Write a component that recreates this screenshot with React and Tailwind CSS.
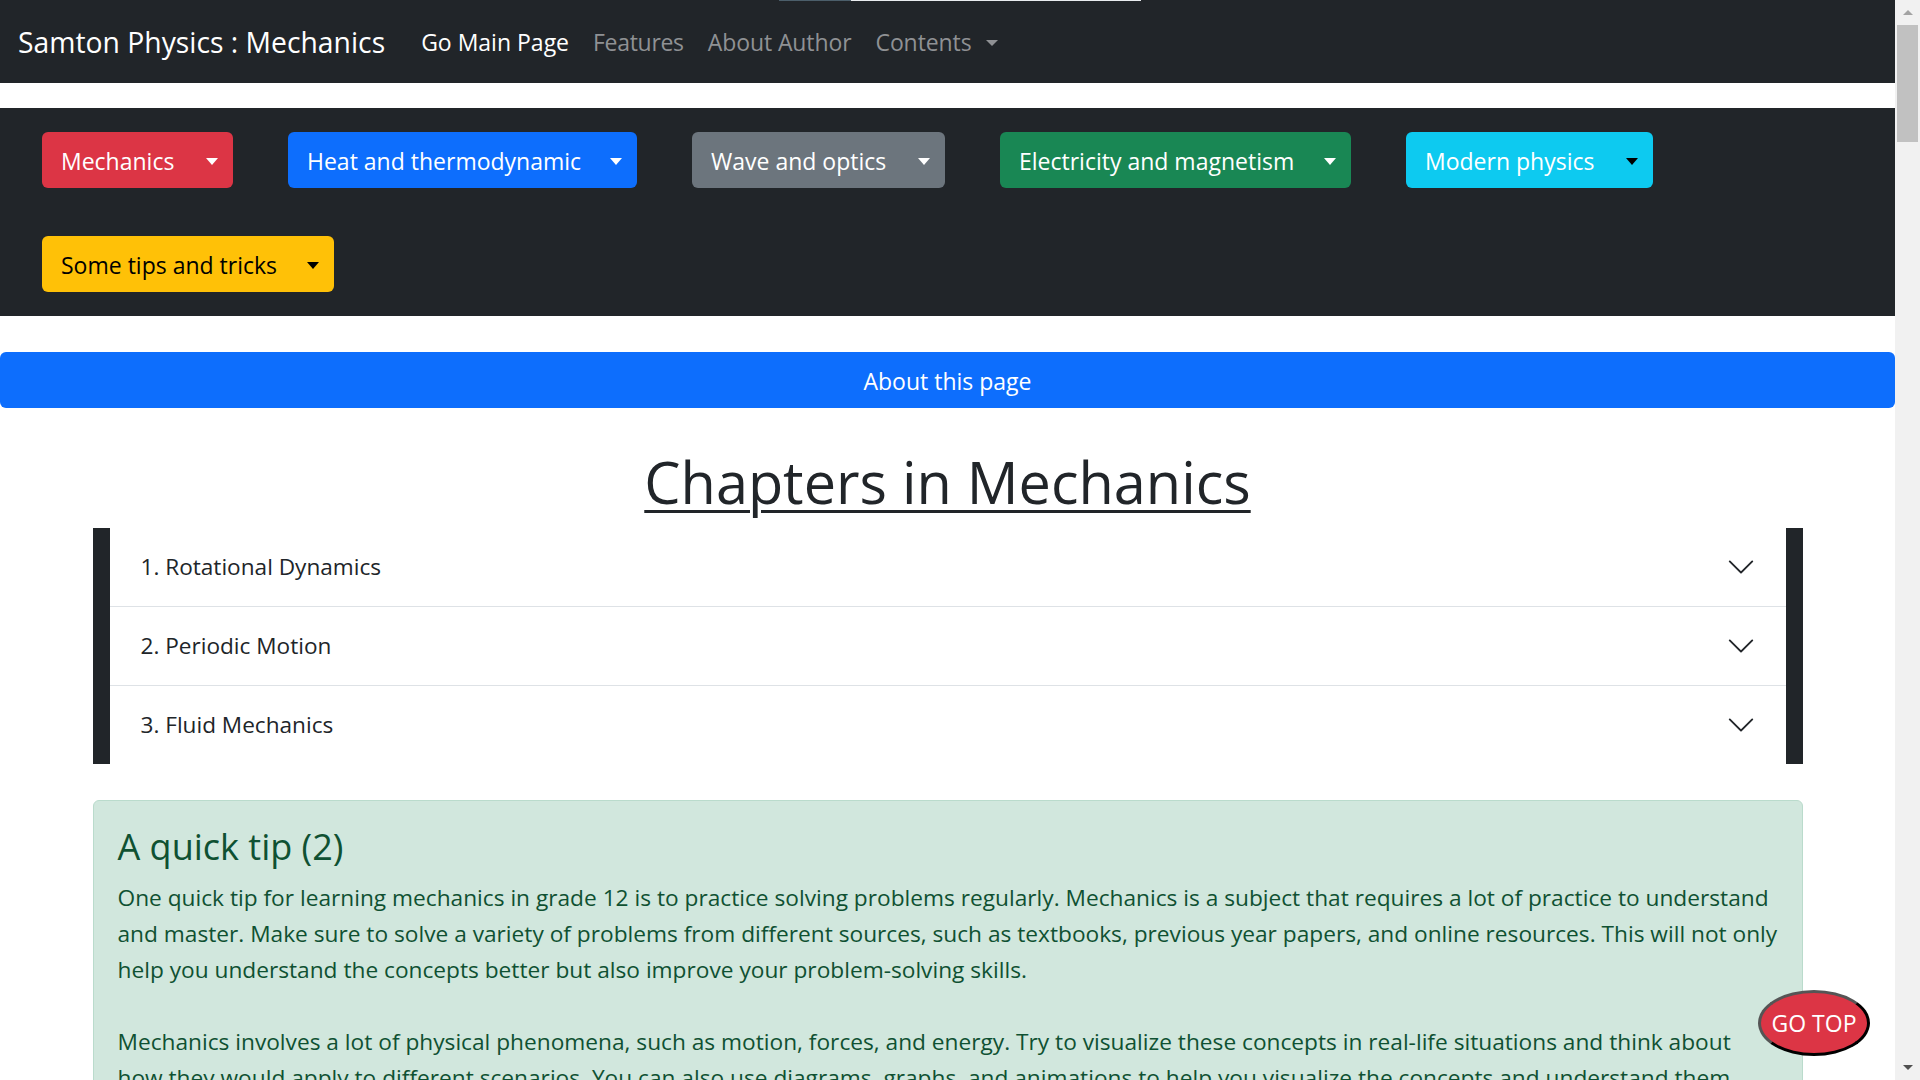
import { useState } from 'react';

const subjects = [
  { label: 'Mechanics', bg: 'bg-[#dc3545]', text: 'text-white', caret: 'border-t-white', w: 'w-[191px]' },
  { label: 'Heat and thermodynamic', bg: 'bg-[#0d6efd]', text: 'text-white', caret: 'border-t-white', w: 'w-[349px]' },
  { label: 'Wave and optics', bg: 'bg-[#6c757d]', text: 'text-white', caret: 'border-t-white', w: 'w-[253px]' },
  { label: 'Electricity and magnetism', bg: 'bg-[#198754]', text: 'text-white', caret: 'border-t-white', w: 'w-[351px]' },
  { label: 'Modern physics', bg: 'bg-[#0dcaf0]', text: 'text-white', caret: 'border-t-black', w: 'w-[247px]' },
  { label: 'Some tips and tricks', bg: 'bg-[#ffc107]', text: 'text-black', caret: 'border-t-black', w: 'w-[292px]' },
];

const chapters = ['1. Rotational Dynamics', '2. Periodic Motion', '3. Fluid Mechanics'];

function Chevron() {
  return (
    <svg width="30" height="30" viewBox="0 0 16 16" fill="#212529">
      <path
        fillRule="evenodd"
        d="M1.646 4.646a.5.5 0 0 1 .708 0L8 10.293l5.646-5.647a.5.5 0 0 1 .708.708l-6 6a.5.5 0 0 1-.708 0l-6-6a.5.5 0 0 1 0-.708z"
      />
    </svg>
  );
}

function App() {
  const [open, setOpen] = useState(null);

  return (
    <div className="flex h-screen overflow-hidden bg-white font-['Open_Sans',sans-serif] text-[#212529]">
      <div className="relative min-w-0 flex-1 overflow-hidden">
        {/* thin loading bar at the very top */}
        <div className="absolute left-[779px] top-0 flex h-px w-[362px]">
          <div className="w-[72px] bg-[#4b5e6a]" />
          <div className="flex-1 bg-[#e9ecef]" />
        </div>

        {/* NAVBAR */}
        <nav className="flex h-[83px] items-center bg-[#212529] px-[18px] pt-[2px]">
          <a className="mr-[24px] text-[28.3px] text-white">Samton Physics : Mechanics</a>
          <a className="px-3 text-[23px] text-white">Go Main Page</a>
          <a className="px-3 text-[23px] tracking-[-0.3px] text-[#8f9194]">Features</a>
          <a className="px-3 text-[23px] tracking-[-0.1px] text-[#8f9194]">About Author</a>
          <a className="flex items-center gap-[14px] px-3 text-[23px] tracking-[-0.1px] text-[#8f9194]">
            Contents
            <span className="h-0 w-0 border-x-[6px] border-t-[6px] border-x-transparent border-t-[#8f9194]" />
          </a>
        </nav>

        {/* SUBJECT DROPDOWNS */}
        <div className="mt-[25px] flex flex-wrap gap-x-[55px] gap-y-12 bg-[#212529] px-[42px] py-6">
          {subjects.map((s) => (
            <button
              key={s.label}
              className={`flex h-[56px] items-center justify-between rounded-[6px] pl-[19px] pr-[15px] pt-[2px] text-[23px] ${s.bg} ${s.text} ${s.w}`}
            >
              {s.label}
              <span className={`h-0 w-0 border-x-[6px] border-t-[7px] border-x-transparent ${s.caret}`} />
            </button>
          ))}
        </div>

        {/* ABOUT BAR */}
        <button className="mt-9 flex h-[56px] w-full items-center justify-center rounded-[6px] bg-[#0d6efd] pt-[2px] text-[23px] text-white">
          About this page
        </button>

        <h1 className="mb-[10px] mt-[38px] text-center text-[57.6px] font-medium leading-[72px] underline decoration-[3px] underline-offset-[6px]">
          Chapters in Mechanics
        </h1>

        {/* CHAPTER ACCORDION */}
        <div className="mx-auto w-[1710px] border-x-[17px] border-[#212529] bg-white">
          {chapters.map((c, i) => (
            <div key={c} className={i > 0 ? 'border-t border-[#dee2e6]' : ''}>
              <button
                onClick={() => setOpen(open === i ? null : i)}
                className="flex h-[78px] w-full items-center justify-between pl-[31px] pr-[30px] text-[22.6px]"
              >
                {c}
                <Chevron />
              </button>
            </div>
          ))}
        </div>

        {/* TIP */}
        <div className="mx-auto mt-9 w-[1710px] rounded-[6px] border border-[#badbcc] bg-[#d1e7dd] p-6 text-[#0f5132]">
          <h4 className="mb-3 text-[36px] font-medium leading-[43px]">A quick tip (2)</h4>
          <p className="text-[22.7px] leading-[36px]">
            One quick tip for learning mechanics in grade 12 is to practice solving problems regularly. Mechanics is a
            subject that requires a lot of practice to understand and master. Make sure to solve a variety of problems
            from different sources, such as textbooks, previous year papers, and online resources. This will not only
            help you understand the concepts better but also improve your problem-solving skills.
            <br />
            <br />
            Mechanics involves a lot of physical phenomena, such as motion, forces, and energy. Try to visualize these
            concepts in real-life situations and think about how they would apply to different scenarios. You can also
            use diagrams, graphs, and animations to help you visualize the concepts and understand them better.
          </p>
        </div>

        <button className="absolute bottom-[24px] right-[25px] flex h-[66px] w-[112px] items-center justify-center rounded-[50%] border-[3px] border-black border-l-[#555] border-t-[#555] bg-[#dc3545] text-[23px] text-white">
          GO TOP
        </button>
      </div>

      {/* window scrollbar */}
      <div className="flex w-[25px] flex-col items-center bg-[#f1f1f1]">
        <div className="flex h-[25px] items-center">
          <span className="h-0 w-0 border-x-[5px] border-b-[5px] border-x-transparent border-b-[#a3a3a3]" />
        </div>
        <div className="h-[117px] w-[21px] bg-[#c1c1c1]" />
        <div className="flex-1" />
        <div className="flex h-[25px] items-center">
          <span className="h-0 w-0 border-x-[5px] border-t-[5px] border-x-transparent border-t-[#505050]" />
        </div>
      </div>
    </div>
  );
}

export default App;
